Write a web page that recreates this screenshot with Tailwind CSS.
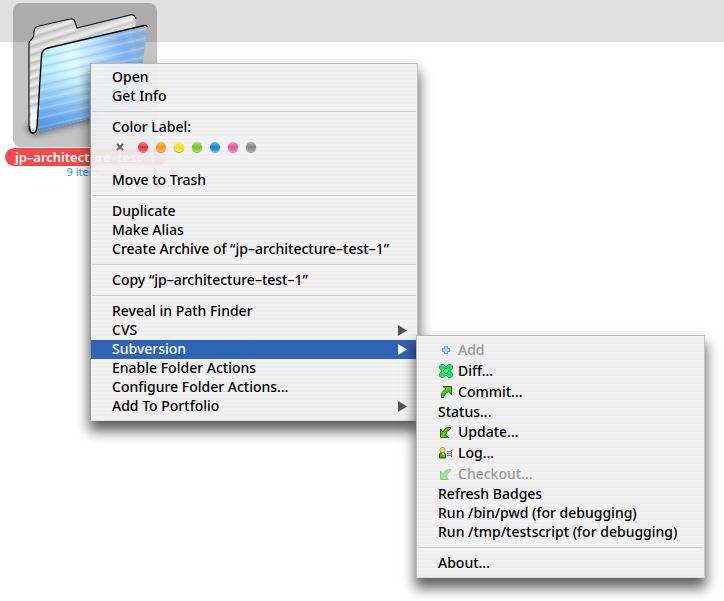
<!DOCTYPE html>
<html lang="en">
<head>
<meta charset="utf-8">
<title>Path Finder</title>
<script src="https://cdn.jsdelivr.net/npm/@tailwindcss/browser@4"></script>
</head>
<body class="relative min-h-screen overflow-hidden bg-white font-['Noto_Sans','Open_Sans',sans-serif] text-sm font-medium text-black">
<div class="absolute inset-x-0 top-0 h-[42px] bg-[#e0e0e0]"></div>

<main class="relative flex">
  <figure class="flex flex-col items-center pl-[5px] pt-[3px]">
    <div class="size-36 rounded-lg bg-black/23">
      <svg class="size-36" viewBox="13 3 144 144" aria-label="Folder">
        <defs>
          <linearGradient id="back" x1="0" y1="0" x2="1" y2="1"><stop offset="0" stop-color="#cfcfcf"/><stop offset=".5" stop-color="#dedede"/><stop offset="1" stop-color="#bbb"/></linearGradient>
          <linearGradient id="front" gradientUnits="userSpaceOnUse" x1="42" y1="70" x2="147" y2="45"><stop offset="0" stop-color="#b4e6ff"/><stop offset=".3" stop-color="#dcfcff"/><stop offset=".55" stop-color="#b4dcfc"/><stop offset=".8" stop-color="#86aeee"/><stop offset=".88" stop-color="#8fb8f0"/><stop offset=".89" stop-color="#8ab2d8"/><stop offset="1" stop-color="#8fb4d6"/></linearGradient>
          <linearGradient id="deep" x1="0" y1="0" x2="0" y2="1"><stop offset=".45" stop-color="#5a9eea" stop-opacity="0"/><stop offset="1" stop-color="#3a80d8" stop-opacity=".9"/></linearGradient>
          <pattern id="ribs" width="9" height="9" patternUnits="userSpaceOnUse" patternTransform="rotate(-13)"><rect y="1" width="9" height="3" fill="#5e97dd" opacity=".13"/><rect y="2" width="9" height="1" fill="#5e97dd" opacity=".13"/><rect y="6" width="9" height="2" fill="#fff" opacity=".2"/></pattern>
          <pattern id="ribs2" width="8" height="8" patternUnits="userSpaceOnUse" patternTransform="rotate(-18)"><rect y="1" width="8" height="3" fill="#fff" opacity=".4"/><rect y="5" width="8" height="2" fill="#888" opacity=".22"/></pattern>
          <filter id="soft"><feGaussianBlur stdDeviation="3"/></filter>
        </defs>
        <path d="M24 128L34 136L100 119V112L36 120Z" fill="#000" opacity=".4" filter="url(#soft)"/>
        <path d="M33 133Q29 133 29 127V44Q29 41 32 39Q34 37 34 32Q34 27 39 26L70 19Q74 18 75 22L77 28L130 15Q135 14 136 19V30L46 50L37 131Q36 133 33 133Z" fill="url(#back)"/>
        <path d="M33 133Q29 133 29 127V44Q29 41 32 39Q34 37 34 32Q34 27 39 26L70 19Q74 18 75 22L77 28L130 15Q135 14 136 19V30L46 50L37 131Q36 133 33 133Z" fill="url(#ribs2)"/>
        <path d="M33 133Q29 133 29 127V44Q29 41 32 39Q34 37 34 32Q34 27 39 26L70 19Q74 18 75 22L77 28L130 15Q135 14 136 19" fill="none" stroke="#181818" stroke-width="1.2"/>
        <path d="M136 18V27" stroke="#aaa"/>
        <path d="M37 132L42 56Q42 49 48 48L144 25Q147 25 147 29L138 106Z" fill="url(#front)"/>
        <path d="M37 132L42 56Q42 49 48 48L144 25Q147 25 147 29L138 106Z" fill="url(#deep)"/>
        <path d="M37 132L42 56Q42 49 48 48L144 25Q147 25 147 29L138 106Z" fill="url(#ribs)"/>
        <path d="M31 110V127Q33 132 35 127L37 110Z" fill="#fff" opacity=".8"/>
        <path d="M29.500 126Q30 133 33 133Q36 133 37 128L41.500 56Q42 49 48 48L144 25.500Q147 25 147 27" fill="none" stroke="#080808" stroke-width="1.400"/>
      </svg>
    </div>
    <figcaption class="mt-px flex flex-col items-center">
      <span class="flex h-[18px] items-center rounded-full bg-[#f5494b] px-[10px] text-[13px] leading-4 font-semibold text-white">jp–architecture–test–1</span>
      <span class="text-[11px] leading-3 font-normal text-[#3591ee]">9 items</span>
    </figcaption>
  </figure>
</main>

<nav aria-label="Folder menu" class="absolute left-[90px] top-[63px] flex w-[328px] flex-col border border-t-[#b8b8b8] border-r-[#c4c4c4] border-l-[#999] border-b-[#d8d8d8] bg-[repeating-linear-gradient(#f2f2f2ee_0_2px,#eeeeeeee_2px_4px)] py-1 shadow-[0_9px_12px_1px_#000000a0] *:shrink-0">
  <button class="h-[19px] px-[21px] pb-[2px] text-left leading-[17px]">Open</button>
  <button class="h-[19px] px-[21px] pb-[2px] text-left leading-[17px]">Get Info</button>
  <hr class="mx-px mt-[5px] mb-[6px] border-[#cfcfcf]">
  <div class="h-[19px] px-[21px] pb-[2px] leading-[17px]">Color Label:</div>
  <div class="flex h-[34px] items-start gap-2 pl-6 pt-[5px]">
    <button aria-label="No label" class="mr-[5px] size-[10px]"><svg viewBox="0 0 10 10" class="size-[10px]"><path d="M2 2L8 8M8 2L2 8" stroke="#666" stroke-width="2"/></svg></button>
    <button aria-label="Red" class="size-[10px] rounded-full bg-linear-to-b from-[#ff7a80] via-[#fa2440] to-[#ff5868] shadow-[0_1px_1px_#0006]"></button>
    <button aria-label="Orange" class="size-[10px] rounded-full bg-linear-to-b from-[#ffc060] via-[#fb9410] to-[#ffb840] shadow-[0_1px_1px_#0006]"></button>
    <button aria-label="Yellow" class="size-[10px] rounded-full bg-linear-to-b from-[#fff080] via-[#f0dc00] to-[#fff030] shadow-[0_1px_1px_#0006]"></button>
    <button aria-label="Green" class="size-[10px] rounded-full bg-linear-to-b from-[#aae868] via-[#6acb10] to-[#98ee38] shadow-[0_1px_1px_#0006]"></button>
    <button aria-label="Blue" class="size-[10px] rounded-full bg-linear-to-b from-[#68b8ec] via-[#0a86d8] to-[#38b0f8] shadow-[0_1px_1px_#0006]"></button>
    <button aria-label="Pink" class="size-[10px] rounded-full bg-linear-to-b from-[#ff98cc] via-[#f844a4] to-[#ff78c0] shadow-[0_1px_1px_#0006]"></button>
    <button aria-label="Gray" class="size-[10px] rounded-full bg-linear-to-b from-[#b4b4b4] via-[#868686] to-[#a8a8a8] shadow-[0_1px_1px_#0006]"></button>
  </div>
  <button class="h-[19px] px-[21px] pb-[2px] text-left leading-[17px]">Move to Trash</button>
  <hr class="mx-px mt-[5px] mb-[6px] border-[#cfcfcf]">
  <button class="h-[19px] px-[21px] pb-[2px] text-left leading-[17px]">Duplicate</button>
  <button class="h-[19px] px-[21px] pb-[2px] text-left leading-[17px]">Make Alias</button>
  <button class="h-[19px] px-[21px] pb-[2px] text-left leading-[17px]">Create Archive of “jp–architecture–test–1”</button>
  <hr class="mx-px mt-[5px] mb-[6px] border-[#cfcfcf]">
  <button class="h-[19px] px-[21px] pb-[2px] text-left leading-[17px]">Copy “jp–architecture–test–1”</button>
  <hr class="mx-px mt-[5px] mb-[6px] border-[#cfcfcf]">
  <button class="h-[19px] px-[21px] pb-[2px] text-left leading-[17px]">Reveal in Path Finder</button>
  <button class="flex h-[19px] items-center justify-between pl-[21px] pr-[10px]"><span class="pb-[2px] leading-[17px]">CVS</span><svg viewBox="0 0 9 11" class="h-[11px] w-[9px]"><path d="M0 0L9 5.500L0 11Z" fill="#555"/></svg></button>
  <button class="-mr-px flex h-[19px] items-center justify-between bg-[#2f63b4] pl-[21px] pr-[11px] text-white"><span class="pb-[2px] leading-[17px]">Subversion</span><svg viewBox="0 0 9 11" class="h-[11px] w-[9px]"><path d="M0 0L9 5.500L0 11Z" fill="#fff"/></svg></button>
  <button class="h-[19px] px-[21px] pb-[2px] text-left leading-[17px]">Enable Folder Actions</button>
  <button class="h-[19px] px-[21px] pb-[2px] text-left leading-[17px]">Configure Folder Actions…</button>
  <button class="flex h-[19px] items-center justify-between pl-[21px] pr-[10px]"><span class="pb-[2px] leading-[17px]">Add To Portfolio</span><svg viewBox="0 0 9 11" class="h-[11px] w-[9px]"><path d="M0 0L9 5.500L0 11Z" fill="#555"/></svg></button>
</nav>

<nav aria-label="Subversion" class="absolute left-[416px] top-[335px] flex w-[289px] flex-col border border-t-[#b8b8b8] border-r-[#c4c4c4] border-l-[#bbb] border-b-[#d8d8d8] bg-[repeating-linear-gradient(#f2f2f2_0_2px,#eeeeee_2px_4px)] py-1 shadow-[0_9px_12px_1px_#000000a0] *:shrink-0">
  <button disabled class="flex h-[21px] items-center gap-1 px-[21px] pb-[2px] text-[#999]">
    <svg viewBox="0 0 16 16" class="size-4"><path d="M6.500 4.500H9.500V6.500H11.500V9.500H9.500V11.500H6.500V9.500H4.500V6.500H6.500Z" fill="#9fd0ee" stroke="#6da4c4"/></svg>Add</button>
  <button class="flex h-[21px] items-center gap-1 px-[21px] pb-[2px]">
    <svg viewBox="0 0 16 16" class="size-4"><path d="M3 1.500H5.500L8 4L10.500 1.500H13L14.500 3V5.500L12 8L14.500 10.500V13L13 14.500H10.500L8 12L5.500 14.500H3L1.500 13V10.500L4 8L1.500 5.500V3Z" fill="#26dc62" stroke="#22b855"/><path d="M8 5L11 8L8 11L5 8Z" fill="#58f090" stroke="#108040" stroke-dasharray="2 1"/></svg>Diff...</button>
  <button class="flex h-[21px] items-center gap-1 px-[21px] pb-[2px]">
    <svg viewBox="0 0 16 16" class="size-4"><path d="M5 2.500H13.500V10.500L11 7.500Q6.500 8.500 5.500 13.500H3.500Q2.500 8 8 5Z" fill="#58c818" stroke="#1b6608"/></svg>Commit...</button>
  <button class="h-[19px] px-[21px] pb-[2px] text-left leading-[17px]">Status...</button>
  <button class="flex h-[21px] items-center gap-1 px-[21px] pb-[2px]">
    <svg viewBox="0 0 16 16" class="size-4"><path d="M2.500 5V13.500H10.500L7.500 11Q8.500 6.500 12.500 5V3.500Q8 2.500 5 8Z" fill="#58c818" stroke="#1b6608"/></svg>Update...</button>
  <button class="flex h-[21px] items-center gap-1 px-[21px] pb-[2px]">
    <svg viewBox="0 0 16 16" class="size-4"><path d="M1.500 13V9.500Q1.500 7.500 4 7.500Q7.500 7.500 7.500 9.500V13Z" fill="#48a818" stroke="#246008"/><circle cx="4.500" cy="5" r="2.500" fill="#f4d898" stroke="#c49028"/><path d="M4 8L5 11L6 8Z" fill="#fff"/><path d="M9 6.500H13M9 8.500H13M9 10.500H13M13.500 5V12" stroke="#777"/></svg>Log...</button>
  <button disabled class="flex h-[21px] items-center gap-1 px-[21px] pb-[2px] text-[#999]">
    <svg viewBox="0 0 16 16" class="size-4 opacity-60"><path d="M2.500 5V13.500H10.500L7.500 11Q8.500 6.500 12.500 5V3.500Q8 2.500 5 8Z" fill="#70e058" stroke="#48b040"/></svg>Checkout...</button>
  <button class="h-[19px] px-[21px] pb-[2px] text-left leading-[17px]">Refresh Badges</button>
  <button class="h-[19px] px-[21px] pb-[2px] text-left leading-[17px]">Run /bin/pwd (for debugging)</button>
  <button class="h-[19px] px-[21px] pb-[2px] text-left leading-[17px]">Run /tmp/testscript (for debugging)</button>
  <hr class="mx-px mt-[5px] mb-[6px] border-[#cfcfcf]">
  <button class="h-[19px] px-[21px] pb-[2px] text-left leading-[17px]">About...</button>
</nav>
</body>
</html>
